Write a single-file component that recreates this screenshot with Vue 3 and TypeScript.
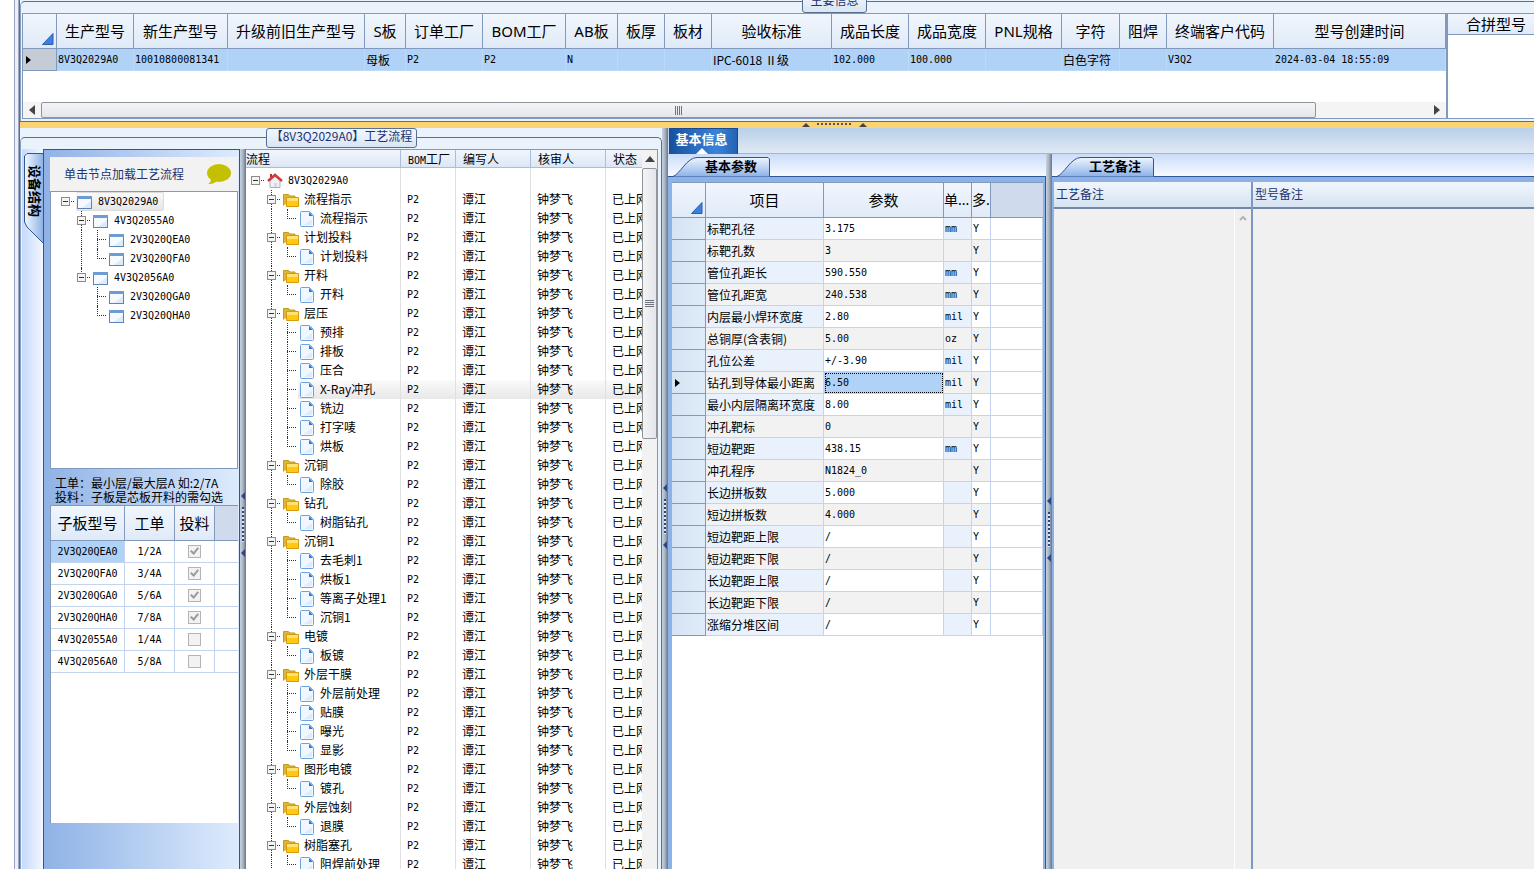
<script setup lang="ts">
interface Column { title: string; width: number; value: string }
interface TreeRow { text: string; level: number; kind: 'root' | 'folder' | 'file' | 'window'; last: boolean; parentLast: boolean; open: boolean; selected?: boolean }
interface Param { name: string; value: string; unit: string }

const columns: Column[] = [
  { title: '生产型号', width: 77, value: '8V3Q2029A0' },
  { title: '新生产型号', width: 94, value: '10010800081341' },
  { title: '升级前旧生产型号', width: 137, value: '' },
  { title: 'S板', width: 41, value: '母板' },
  { title: '订单工厂', width: 77, value: 'P2' },
  { title: 'BOM工厂', width: 83, value: 'P2' },
  { title: 'AB板', width: 52, value: 'N' },
  { title: '板厚', width: 47, value: '' },
  { title: '板材', width: 47, value: '' },
  { title: '验收标准', width: 120, value: 'IPC-6018 Ⅱ级' },
  { title: '成品长度', width: 77, value: '102.000' },
  { title: '成品宽度', width: 77, value: '100.000' },
  { title: 'PNL规格', width: 76, value: '' },
  { title: '字符', width: 58, value: '白色字符' },
  { title: '阻焊', width: 47, value: '' },
  { title: '终端客户代码', width: 107, value: 'V3Q2' },
  { title: '型号创建时间', width: 172, value: '2024-03-04 18:55:09' },
]

const win = (text: string, level: number, last: boolean, parentLast = false): TreeRow =>
  ({ text, level, kind: 'window', last, parentLast, open: level < 2, selected: level === 0 })

const boards: TreeRow[] = [
  win('8V3Q2029A0', 0, true),
  win('4V3Q2055A0', 1, false),
  win('2V3Q20QEA0', 2, false),
  win('2V3Q20QFA0', 2, true),
  win('4V3Q2056A0', 1, true),
  win('2V3Q20QGA0', 2, false, true),
  win('2V3Q20QHA0', 2, true, true),
]

const groups: [string, string[]][] = [
  ['流程指示', ['流程指示']],
  ['计划投料', ['计划投料']],
  ['开料', ['开料']],
  ['层压', ['预排', '排板', '压合', 'X-Ray冲孔', '铣边', '打字唛', '烘板']],
  ['沉铜', ['除胶']],
  ['钻孔', ['树脂钻孔']],
  ['沉铜1', ['去毛刺1', '烘板1', '等离子处理1', '沉铜1']],
  ['电镀', ['板镀']],
  ['外层干膜', ['外层前处理', '贴膜', '曝光', '显影']],
  ['图形电镀', ['镀孔']],
  ['外层蚀刻', ['退膜']],
  ['树脂塞孔', ['阻焊前处理']],
]

const steps: TreeRow[] = [
  { text: '8V3Q2029A0', level: 0, kind: 'root', last: true, parentLast: false, open: true },
]
for (const [name, children] of groups) {
  steps.push({ text: name, level: 1, kind: 'folder', last: false, parentLast: false, open: true })
  children.forEach((child, i) => steps.push({
    text: child, level: 2, kind: 'file', last: i === children.length - 1, parentLast: false, open: false,
    selected: child === 'X-Ray冲孔',
  }))
}

const orders = [
  ['2V3Q20QEA0', '1/2A', true],
  ['2V3Q20QFA0', '3/4A', true],
  ['2V3Q20QGA0', '5/6A', true],
  ['2V3Q20QHA0', '7/8A', true],
  ['4V3Q2055A0', '1/4A', false],
  ['4V3Q2056A0', '5/8A', false],
] as [string, string, boolean][]

const param = (name: string, value: string, unit = ''): Param => ({ name, value, unit })
const params: Param[] = [
  param('标靶孔径', '3.175', 'mm'),
  param('标靶孔数', '3'),
  param('管位孔距长', '590.550', 'mm'),
  param('管位孔距宽', '240.538', 'mm'),
  param('内层最小焊环宽度', '2.80', 'mil'),
  param('总铜厚(含表铜)', '5.00', 'oz'),
  param('孔位公差', '+/-3.90', 'mil'),
  param('钻孔到导体最小距离', '6.50', 'mil'),
  param('最小内层隔离环宽度', '8.00', 'mil'),
  param('冲孔靶标', '0'),
  param('短边靶距', '438.15', 'mm'),
  param('冲孔程序', 'N1824_0'),
  param('长边拼板数', '5.000'),
  param('短边拼板数', '4.000'),
  param('短边靶距上限', '/'),
  param('短边靶距下限', '/'),
  param('长边靶距上限', '/'),
  param('长边靶距下限', '/'),
  param('涨缩分堆区间', '/'),
]

const isLatin = (s: string) => /^[\x20-\x7e]+$/.test(s)
</script>

<template>
  <div class="app">
    <div class="edge"></div>
    <main class="main">
      <section class="top">
        <div class="frame"></div>
        <h2 class="caption caption-top">主要信息</h2>
        <div class="top-body">
          <div class="models">
            <table class="grid models-table">
              <colgroup>
                <col class="c34">
                <col v-for="c in columns" :key="c.title" :style="{ width: c.width + 'px' }">
              </colgroup>
              <thead>
                <tr>
                  <th class="corner"><svg width="12" height="12" viewBox="0 0 12 12"><path d="M11 0.5V11.5H0.5Z" fill="#3c7fe0" stroke="#2b5fae" /></svg></th>
                  <th v-for="c in columns" :key="c.title">{{ c.title }}</th>
                </tr>
              </thead>
              <tbody>
                <tr class="picked">
                  <td class="marker"><svg width="5" height="8" viewBox="0 0 5 8"><path d="M0 0L5 4L0 8Z" /></svg></td>
                  <td v-for="c in columns" :key="c.title" :class="{ latin: isLatin(c.value) }">{{ c.value }}</td>
                </tr>
              </tbody>
            </table>
            <div class="hscroll">
              <button class="arrow" aria-label="向左"><svg width="6" height="10" viewBox="0 0 6 10"><path d="M6 0V10L0 5Z" fill="#444" /></svg></button>
              <div class="hthumb"><i></i><i></i><i></i><i></i></div>
              <div class="hspace"></div>
              <button class="arrow" aria-label="向右"><svg width="6" height="10" viewBox="0 0 6 10"><path d="M0 0V10L6 5Z" fill="#444" /></svg></button>
            </div>
          </div>
          <div class="merge">
            <div class="merge-head">合拼型号</div>
          </div>
        </div>
      </section>

      <div class="hsplit">
        <svg width="8" height="4" viewBox="0 0 8 4"><path d="M4 0L8 4H0Z" fill="#444" /></svg>
        <span class="hdots"></span>
        <svg width="8" height="4" viewBox="0 0 8 4"><path d="M4 0L8 4H0Z" fill="#444" /></svg>
      </div>

      <div class="bottom">
        <section class="left">
          <div class="frame"></div>
          <h2 class="caption caption-flow">【8V3Q2029A0】工艺流程</h2>
          <div class="left-body">
            <div class="strip">
              <button class="vtab">
                <svg width="20" height="92" viewBox="0 0 20 92">
                  <defs><linearGradient id="vt"><stop offset="0" stop-color="#f4f8ff" /><stop offset="1" stop-color="#8db2e6" /></linearGradient></defs>
                  <path d="M20 1.5H4L1.5 4V70L4 75L20 91" fill="url(#vt)" stroke="#2f5695" />
                </svg>
                <span>设备结构</span>
              </button>
            </div>
            <div class="device">
              <div class="hint">
                <span>单击节点加载工艺流程</span>
                <svg width="26" height="22" viewBox="0 0 26 22"><ellipse cx="13" cy="10" rx="12" ry="9" fill="#c3c000" /><path d="M5 14C6 17 4 20 2 21C7 21 10 20 12 16Z" fill="#c3c000" /></svg>
              </div>
              <div class="boards" role="tree">
                <div v-for="r in boards" :key="r.text" class="node" role="treeitem">
                  <span v-if="r.level > 0" class="none"></span>
                  <span v-if="r.level > 1" class="guide" :class="{ through: !r.parentLast }"></span>
                  <span class="guide own" :class="{ up: r.level > 0, down: r.level > 0 && !r.last }">
                    <button v-if="r.open" class="toggle" aria-label="折叠"></button>
                  </span>
                  <span class="tag" :class="{ chosen: r.selected }">
                    <svg width="16" height="14" viewBox="0 0 16 14"><rect x="0.5" y="1.5" width="14" height="12" fill="#f6faff" stroke="#5c84b4" /><path d="M0 1H15V4H0Z" fill="#6d9bd4" /><path d="M5 13H14V6Z" fill="#dcebfa" /></svg>
                    <span class="latin">{{ r.text }}</span>
                  </span>
                </div>
              </div>
              <p class="tips">工单：最小层/最大层A 如:2/7A<br>投料：子板是芯板开料的需勾选</p>
              <div class="orders">
                <table class="grid">
                  <colgroup><col class="c74"><col class="c50"><col class="c40"><col></colgroup>
                  <thead><tr><th>子板型号</th><th>工单</th><th>投料</th><th class="filler"></th></tr></thead>
                  <tbody>
                    <tr v-for="(o, i) in orders" :key="o[0]">
                      <td class="latin mid" :class="{ hit: i === 0 }">{{ o[0] }}</td>
                      <td class="latin mid">{{ o[1] }}</td>
                      <td class="mid"><input type="checkbox" class="tick" :checked="o[2]" :aria-label="o[0] + ' 投料'" disabled></td>
                      <td class="rest"></td>
                    </tr>
                  </tbody>
                </table>
              </div>
            </div>
            <div class="vsplit">
              <div class="grip"><i class="tri"></i><i class="vdots"></i><i class="tri"></i></div>
            </div>
            <div class="flow">
              <div class="flow-view">
                <table class="flow-table">
                  <colgroup><col class="c155"><col class="c55"><col class="c75"><col class="c75"><col></colgroup>
                  <thead><tr><th>流程</th><th><span class="latin">BOM</span>工厂</th><th>编写人</th><th>核审人</th><th>状态</th></tr></thead>
                  <tbody>
                    <tr v-for="(r, i) in steps" :key="i" :class="{ active: r.selected }">
                      <td class="tree-cell">
                        <div class="node">
                          <span v-if="r.level > 0" class="none"></span>
                          <span v-if="r.level > 1" class="guide through"></span>
                          <span class="guide own" :class="{ up: r.level > 0, down: r.level > 0 && !r.last }">
                            <button v-if="r.open" class="toggle" aria-label="折叠"></button>
                          </span>
                          <span class="tag" :class="{ run: r.selected }">
                            <svg v-if="r.kind === 'root'" width="16" height="16" viewBox="0 0 16 16"><path d="M3 7L8 3L13 7V14.5H3Z" fill="#eef0f4" stroke="#a9b0bc" /><path d="M3 1H5V4H3Z" fill="#a33" /><path d="M1 8L8 2L15 8" fill="none" stroke="#d23b3b" stroke-width="2.5" /><path d="M7 10H10V14H7Z" fill="#d5dae2" /></svg>
                            <svg v-else-if="r.kind === 'folder'" width="16" height="14" viewBox="0 0 16 14"><path d="M0.5 12.5V1.5H5.5L7 3H12V6" fill="#d9b63c" stroke="#c79a1a" /><path d="M3.5 4.5H15.5V13.5H3.5Z" fill="#ffc90f" stroke="#d79a10" /><path d="M4 5H15V8H4Z" fill="#ffe36e" /></svg>
                            <svg v-else width="16" height="16" viewBox="0 0 16 16"><path d="M1.5 1.5Q1.5 0.5 2.5 0.5H10.5L14.5 4.5V14.5Q14.5 15.5 13.5 15.5H2.5Q1.5 15.5 1.5 14.5Z" fill="#f0f7ff" stroke="#6fa3dd" /><path d="M10 1V5H14Z" fill="#2f74d0" /><path d="M5 14H13V8Z" fill="#dcecfc" /></svg>
                            <span :class="{ latin: isLatin(r.text) }">{{ r.text }}</span>
                          </span>
                        </div>
                      </td>
                      <td class="latin">{{ i ? 'P2' : '' }}</td>
                      <td>{{ i ? '谭江' : '' }}</td>
                      <td>{{ i ? '钟梦飞' : '' }}</td>
                      <td>{{ i ? '已上网' : '' }}</td>
                    </tr>
                  </tbody>
                </table>
              </div>
              <div class="vscroll">
                <button class="up-btn" aria-label="向上"><svg width="10" height="6" viewBox="0 0 10 6"><path d="M5 0L10 6H0Z" fill="#444" /></svg></button>
                <div class="vthumb"><i></i><i></i><i></i><i></i></div>
              </div>
            </div>
          </div>
        </section>

        <div class="vsplit">
          <div class="grip grip-mid"><i class="tri"></i><i class="vdots"></i><i class="tri"></i></div>
        </div>

        <section class="right">
          <nav class="ribbon">
            <button class="ribbon-tab">基本信息<svg width="12" height="6" viewBox="0 0 12 6"><path d="M6 0L12 6H0Z" fill="#fff" /></svg></button>
          </nav>
          <div class="panes">
            <div class="pane params">
              <div class="tabs">
                <button class="tab"><svg width="102" height="21" viewBox="0 0 102 21"><defs><linearGradient id="tb" x2="0" y2="1"><stop offset="0" stop-color="#eff5ff" /><stop offset="1" stop-color="#8db2e8" /></linearGradient></defs><path d="M0 20.5H3C10 18 17 1.5 27 1.5H98L99.5 3V20.5" fill="url(#tb)" stroke="#2f5695" /></svg><span>基本参数</span></button>
              </div>
              <div class="sheet">
                <table class="grid param-table">
                  <colgroup><col class="c34"><col class="c118"><col class="c120"><col class="c28"><col class="c19"><col></colgroup>
                  <thead>
                    <tr>
                      <th class="corner"><svg width="12" height="12" viewBox="0 0 12 12"><path d="M11 0.5V11.5H0.5Z" fill="#3c7fe0" stroke="#2b5fae" /></svg></th>
                      <th>项目</th><th>参数</th><th class="tight">单...</th><th class="tight">多..</th><th class="filler"></th>
                    </tr>
                  </thead>
                  <tbody>
                    <tr v-for="(p, i) in params" :key="p.name">
                      <td class="marker"><svg v-if="i === 7" width="5" height="8" viewBox="0 0 5 8"><path d="M0 0L5 4L0 8Z" /></svg></td>
                      <td class="tint">{{ p.name }}</td>
                      <td class="latin" :class="{ focus: i === 7 }">{{ p.value }}</td>
                      <td class="latin tint">{{ p.unit }}</td>
                      <td class="latin">Y</td>
                      <td class="blank"></td>
                    </tr>
                  </tbody>
                </table>
              </div>
            </div>
            <div class="vsplit">
              <div class="grip grip-right"><i class="tri"></i><i class="vdots"></i><i class="tri"></i></div>
            </div>
            <div class="pane notes">
              <div class="tabs">
                <button class="tab"><svg width="102" height="21" viewBox="0 0 102 21"><path d="M0 20.5H3C10 18 17 1.5 27 1.5H98L99.5 3V20.5" fill="url(#tb)" stroke="#2f5695" /></svg><span>工艺备注</span></button>
              </div>
              <div class="note-row">
                <div class="note first">
                  <label for="craft">工艺备注</label>
                  <div class="note-body">
                    <textarea id="craft" readonly></textarea>
                    <div class="note-bar"><svg width="8" height="6" viewBox="0 0 8 6"><path d="M1 5L4 2L7 5" fill="none" stroke="#b4b4b4" stroke-width="2" /></svg></div>
                  </div>
                </div>
                <div class="note">
                  <label for="model">型号备注</label>
                  <div class="note-body"><textarea id="model" readonly></textarea></div>
                </div>
              </div>
            </div>
          </div>
        </section>
      </div>
    </main>
  </div>
</template>

<style>
html, body { margin: 0; overflow: hidden; }
</style>

<style scoped>
* { box-sizing: border-box; }
.app { display: flex; height: 100vh; overflow: hidden; background: #fff; color: #000; font: 12px/16px "Noto Sans CJK SC", sans-serif; }
button { margin: 0; padding: 0; border: 0; background: none; font: inherit; color: inherit; }
svg { display: block; flex: none; }
.latin { font-family: "DejaVu Sans Mono", monospace; font-size: 10px; }
.edge { flex: none; width: 20px; background: linear-gradient(90deg, #fff 14px, #9aa3bf 14px 15px, #eeeef6 15px 18px, #9aa9c8 18px 19px, #58708f 19px); }
.main { flex: 1; min-width: 0; display: flex; flex-direction: column; background: #eaf3fc; }

.top { position: relative; flex: none; height: 122px; padding: 13px 0 3px 2px; border-bottom: 1px solid #58708f; }
.frame { position: absolute; top: 1px; left: 0; right: 0; bottom: 0; border-top: 1px solid #58708f; border-left: 1px solid #8a9fbb; border-top-left-radius: 5px; }
.caption { position: absolute; z-index: 2; margin: 0; border: 1px solid #58708f; border-radius: 3px; background: linear-gradient(#f2f7fe, #d9e5f3); color: #22326e; font-size: 12px; font-weight: 400; line-height: 14px; text-align: center; white-space: nowrap; }
.caption-top { top: -8px; left: 782px; width: 65px; height: 21px; }
.top-body { position: relative; display: flex; height: 106px; }
.models { flex: 1; min-width: 0; overflow: hidden; display: flex; flex-direction: column; background: #fff; border: 1px solid #8099bd; border-right: 0; }
.grid { width: 100%; table-layout: fixed; border-collapse: separate; border-spacing: 0; }
.grid th { height: 35px; padding: 0; border-right: 1px solid #8099bd; border-bottom: 1px solid #8099bd; background: linear-gradient(#f1f6fd, #e0eaf7); font: 400 15px/20px "Noto Sans", "Noto Sans CJK SC", sans-serif; white-space: nowrap; overflow: hidden; }
.grid th.corner svg { margin: 16px 2px 0 auto; }
.grid th.filler { background: #cfdbec; border-right: 0; }
.grid th.tight { text-align: left; font-size: 14px; }
.grid td { height: 22px; padding: 0 1px; border-right: 1px solid #c3d5ee; border-bottom: 1px solid #c3d5ee; line-height: 19px; white-space: nowrap; overflow: hidden; }
.grid td.latin { line-height: 21px; }
.c34 { width: 34px; } .c74 { width: 74px; } .c50 { width: 50px; } .c40 { width: 40px; }
.c118 { width: 118px; } .c120 { width: 120px; } .c28 { width: 28px; } .c19 { width: 19px; }
.c155 { width: 155px; } .c55 { width: 55px; } .c75 { width: 75px; }
.models-table { width: 1423px; }
.picked td { background: #afd2f6; border-color: #bcd9f8; }
.grid td.marker { padding-left: 3px; background: linear-gradient(90deg, #d5e3f3, #dfebf8); border-color: #8099bd; }
.grid .picked td.marker { background: #c5ccd6; }
.hscroll { display: flex; height: 16px; margin-top: auto; background: #f4f4f5; }
.arrow { width: 18px; display: flex; align-items: center; justify-content: center; }
.hthumb { flex: 1; display: flex; align-items: center; justify-content: center; gap: 1px; border: 1px solid #8f959d; border-radius: 2px; background: linear-gradient(#f3f4f6, #e4e6eb); }
.hthumb i { width: 1px; height: 9px; background: #70757c; }
.hspace { width: 112px; }
.merge { flex: none; width: 88px; background: #fff; border: 1px solid #8099bd; border-width: 1px 0 1px 2px; overflow: hidden; }
.merge-head { height: 21px; padding-left: 18px; border-bottom: 1px solid #8099bd; background: linear-gradient(#f1f6fd, #e0eaf7); font: 15px/20px "Noto Sans CJK SC", sans-serif; white-space: nowrap; }

.hsplit { flex: none; display: flex; align-items: flex-end; gap: 7px; height: 6px; padding: 0 0 1px 782px; background: #fbd374; }
.hdots { width: 35px; height: 2px; margin-bottom: 2px; background: repeating-linear-gradient(90deg, #555 0 2px, transparent 2px 4px); }

.bottom { flex: 1; min-height: 0; display: flex; }
.left { position: relative; flex: none; width: 642px; padding: 21px 4px 0 2px; }
.left .frame { top: 9px; border-right: 1px solid #58708f; border-top-right-radius: 5px; }
.caption-flow { top: 0; left: 246px; width: 151px; height: 20px; }
.left-body { position: relative; display: flex; height: 100%; }
.strip { flex: none; width: 22px; padding-top: 3px; background: linear-gradient(90deg, #c6dafa, #f2f7ff); border-right: 1px solid #2f5695; }
.vtab { position: relative; display: block; width: 21px; height: 92px; }
.vtab svg { margin-left: 1px; }
.vtab span { position: absolute; left: 6px; top: 13px; writing-mode: vertical-rl; text-orientation: sideways; font-weight: 700; font-size: 13px; line-height: 14px; }
.device { flex: none; width: 196px; padding: 7px 1px 0 6px; border-top: 1px solid #2f5695; border-right: 1px solid #2f5695; background: linear-gradient(90deg, #8fb2e6, #deebfd); }
.hint { display: flex; align-items: center; justify-content: space-between; height: 34px; padding: 0 6px 0 14px; background: #f2f2f2; color: #22326e; }
.boards { height: 278px; padding: 0 0 0 6px; background: #fff; border: 1px solid #8099bd; }
.node { display: flex; align-items: center; height: 19px; }
.none { flex: none; width: 16px; height: 19px; }
.guide { position: relative; flex: none; width: 16px; height: 19px; display: flex; align-items: center; justify-content: center; }
.guide.through::before, .guide.up::before { content: ""; position: absolute; left: 8px; top: 0; height: 10px; border-left: 1px dotted #333; }
.guide.through::before, .guide.down::before { height: 19px; }
.guide.own::after { content: ""; position: absolute; left: 8px; top: 9px; width: 9px; border-top: 1px dotted #333; }
.toggle { position: relative; z-index: 1; width: 9px; height: 9px; border: 1px solid #8c8c8c; background: linear-gradient(#333, #333) 50% 50% / 5px 1px no-repeat #f4f4f4; }
.tag { display: flex; align-items: center; gap: 5px; height: 19px; margin-left: 3px; padding: 0 5px 0 1px; white-space: nowrap; }
.tag > span { padding-bottom: 2px; }
.tag > .latin { padding-bottom: 0; }
.tag.chosen { border: 1px solid #dcdcdc; border-left: 0; border-radius: 2px; background: linear-gradient(#fafafa, #e6e6e6); }
.tips { height: 36px; margin: 0; padding: 7px 0 0 5px; line-height: 14px; white-space: nowrap; }
.orders { height: 318px; overflow: hidden; background: #fff; border: 1px solid #8099bd; border-width: 1px 0 0 1px; }
.grid td.mid { text-align: center; }
.grid td.hit { background: #afd2f6; }
.grid td.rest { border-right: 0; }
.tick { appearance: none; position: relative; display: block; width: 13px; height: 13px; margin: 0 auto; border: 1px solid #b4b4b4; background: #f2f2f2; }
.tick:checked::after { content: ""; position: absolute; left: 3px; top: 0; width: 5px; height: 8px; box-sizing: border-box; border: solid #9a9a9a; border-width: 0 2px 2px 0; transform: rotate(40deg); }

.vsplit { flex: none; width: 6px; background: linear-gradient(90deg, #c6d3e2, #a8b3c0 50%, #64748a); }
.grip { display: flex; flex-direction: column; align-items: flex-start; gap: 7px; padding: 343px 0 0 1px; }
.grip-mid { padding-top: 356px; }
.grip-right { padding-top: 343px; }
.tri { border: solid transparent; border-width: 4px 4px 4px 0; border-right-color: #2b4680; }
.vdots { width: 2px; height: 35px; margin-left: 1px; background: repeating-linear-gradient(#2b4680 0 2px, #dde6f2 2px 4px); }

.flow { flex: 1; min-width: 0; display: flex; overflow: hidden; background: #fff; border: 1px solid #8099bd; border-width: 1px 1px 0 0; }
.flow-view { flex: 1; min-width: 0; overflow: hidden; }
.flow-table { width: 100%; table-layout: fixed; border-collapse: separate; border-spacing: 0; }
.flow-table th { height: 18px; padding: 0 0 0 7px; border-right: 1px solid #a9bedb; border-bottom: 1px solid #a9bedb; background: linear-gradient(#f1f6fd, #dbe7f6); font-weight: 400; text-align: left; line-height: 16px; white-space: nowrap; overflow: hidden; }
.flow-table th .latin { line-height: 10px; }
.flow-table th:first-child { padding-left: 0; }
.flow-table th:last-child, .flow-table td:last-child { border-right: 0; }
.flow-table td { height: 19px; padding: 0 0 2px 6px; border-right: 1px solid #e0e0e0; line-height: 17px; white-space: nowrap; overflow: hidden; }
.flow-table td.latin { padding-bottom: 0; }
.flow-table td.tree-cell { padding: 0 0 0 1px; }
.flow-table tbody tr:first-child td { height: 22px; padding-top: 3px; }
.tag.run { flex: 1; background: linear-gradient(#fafafa, #e8e8e8); }
.flow-table .active td:not(.tree-cell) { background: linear-gradient(#fafafa, #e8e8e8); }
.vscroll { flex: none; width: 15px; background: #f2f2f3; }
.up-btn { display: flex; align-items: center; justify-content: center; width: 15px; height: 18px; }
.vthumb { display: flex; flex-direction: column; align-items: center; justify-content: center; gap: 1px; width: 15px; height: 271px; border: 1px solid #8f959d; border-radius: 2px; background: linear-gradient(90deg, #f4f4f6, #e3e5ea); }
.vthumb i { width: 9px; height: 1px; background: #70757c; }

.right { flex: 1; min-width: 0; display: flex; flex-direction: column; }
.ribbon { flex: none; height: 26px; padding-left: 1px; background: linear-gradient(#bacfe8, #dfe9f5); border-bottom: 1px solid #a7b6c7; }
.ribbon-tab { display: flex; flex-direction: column; align-items: center; justify-content: space-between; width: 69px; height: 26px; padding: 2px 4px 0 0; border: 1px solid #164a93; border-bottom: 0; background: linear-gradient(90deg, #17519f, #3b83d8 70%, #2263b4); color: #fff; font-size: 13px; font-weight: 700; line-height: 16px; }
.panes { flex: 1; min-height: 0; display: flex; }
.pane { display: flex; flex-direction: column; min-width: 0; }
.params { flex: none; width: 378px; }
.notes { flex: 1; }
.tabs { flex: none; height: 23px; padding: 2px 0 0 2px; background: linear-gradient(#cadcf9, #f7faff); border-bottom: 1px solid #2f5695; }
.tab { position: relative; display: block; width: 102px; height: 21px; }
.tab span { position: absolute; left: 35px; top: 2px; font-size: 13px; font-weight: 700; line-height: 16px; white-space: nowrap; }
.sheet { flex: 1; min-height: 0; padding: 5px 2px 0 4px; background: #8db2e8; border-right: 1px solid #2f5695; overflow: hidden; display: flex; flex-direction: column; }
.sheet::after { content: ""; flex: 1; background: #fff; }
.param-table { background: #fff; border-top: 1px solid #8099bd; }
.param-table tbody tr:nth-child(even) td:not(.marker):not(.blank) { background: #f2f2f2; }
.param-table tbody tr:nth-child(odd) td.tint { background: #e8f1fc; }
.param-table tbody tr:nth-child(even) td.focus:not(.marker):not(.blank) { background: #afd2f6; outline: 1px dotted #000; outline-offset: -2px; }
.note-row { flex: 1; min-height: 0; display: flex; padding: 5px 0 0 2px; background: #8db2e8; }
.note { flex: 1; min-width: 0; display: flex; flex-direction: column; }
.note.first { flex: none; width: 199px; border-right: 2px solid #7d98c2; }
.note label { flex: none; height: 27px; padding-left: 2px; border-bottom: 2px solid #7488a6; background: linear-gradient(#f1f6fd, #d6e3f2); color: #22326e; line-height: 24px; }
.note-body { flex: 1; display: flex; min-height: 0; background: #f0f0f0; }
.note-body textarea { flex: 1; min-width: 0; padding: 0; border: 0; outline: 0; resize: none; background: #f0f0f0; }
.note-bar { width: 17px; padding: 6px 0 0 4px; border-left: 1px solid #fff; }
</style>
